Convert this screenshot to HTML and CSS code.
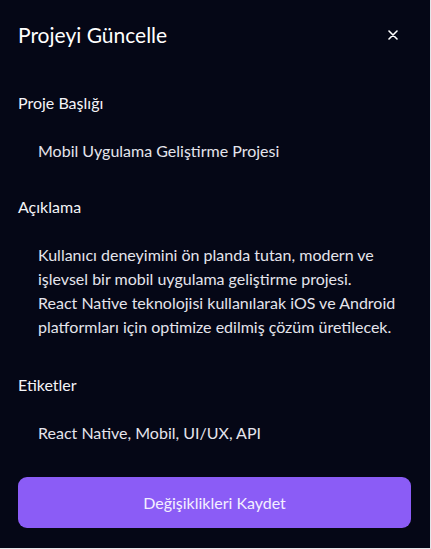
FILE: index.html
```html
<!DOCTYPE html>
<html lang="tr">
<head>
<meta charset="utf-8">
<title>Projeyi Güncelle</title>
<link rel="stylesheet" href="styles.css">
</head>
<body>
<div class="modal">
  <header class="modal-header">
    <h2 class="modal-title">Projeyi Güncelle</h2>
    <button class="close-btn" aria-label="Kapat">
      <svg width="10" height="10" viewBox="0 0 10 10"><path d="M1 1L9 9M9 1L1 9" stroke="#ffffff" stroke-width="1.6" stroke-linecap="round"/></svg>
    </button>
  </header>
  <form class="modal-form">
    <div class="field">
      <label class="field-label">Proje Başlığı</label>
      <div class="field-input">Mobil Uygulama Geliştirme Projesi</div>
    </div>
    <div class="field">
      <label class="field-label">Açıklama</label>
      <div class="field-input field-textarea">Kullanıcı deneyimini ön planda tutan, modern ve işlevsel bir mobil uygulama geliştirme projesi.
React Native teknolojisi kullanılarak iOS ve Android platformları için optimize edilmiş çözüm üretilecek.</div>
    </div>
    <div class="field">
      <label class="field-label">Etiketler</label>
      <div class="field-input">React Native, Mobil, UI/UX, API</div>
    </div>
    <button type="button" class="save-btn">Değişiklikleri Kaydet</button>
  </form>
</div>
</body>
</html>
```
FILE: styles.css
```css
html, body {
  margin: 0;
  padding: 0;
}
body {
  background: #e6e6ea;
  font-family: "Lato", "Noto Sans", sans-serif;
}
.modal {
  width: 430px;
  height: 548px;
  background: #050716;
  box-sizing: border-box;
  overflow: hidden;
}
.modal-header {
  display: flex;
  align-items: center;
  justify-content: space-between;
  padding: 21px 32px 0 18px;
}
.modal-title {
  margin: 0;
  font-size: 21px;
  line-height: 28px;
  font-weight: 400;
  color: #ffffff;
}
.close-btn {
  background: none;
  border: none;
  padding: 0;
  width: 10px;
  height: 10px;
  display: flex;
}
.modal-form {
  display: flex;
  flex-direction: column;
  gap: 20px;
  padding: 42px 19px 0 18px;
}
.field {
  display: flex;
  flex-direction: column;
  gap: 12px;
}
.field-label {
  font-size: 16px;
  line-height: 24px;
  font-weight: 400;
  color: #f4f4f8;
}
.field-input {
  padding: 12px 12px 12px 20px;
  font-size: 16px;
  line-height: 24px;
  color: #e4e4ec;
}
.field-textarea {
  height: 98px;
  white-space: pre-line;
}
.save-btn {
  height: 51px;
  border: none;
  border-radius: 9px;
  background: #8b5cf6;
  color: #f3efff;
  font-family: inherit;
  font-size: 16px;
  font-weight: 400;
}
```
